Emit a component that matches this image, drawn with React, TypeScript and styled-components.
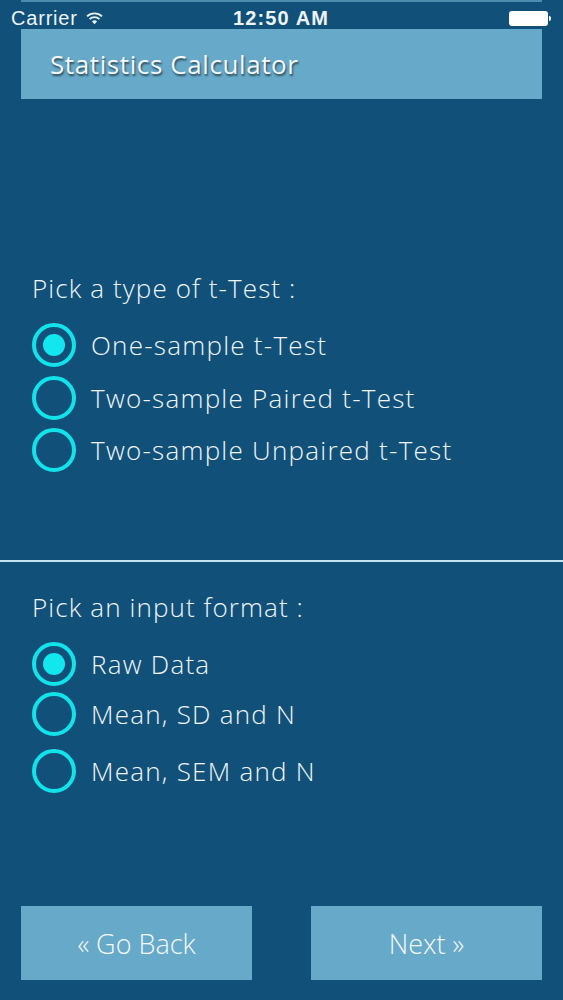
import styled, { createGlobalStyle } from 'styled-components';
import { useState } from 'react';

const GlobalStyle = createGlobalStyle`
  html, body {
    margin: 0;
    padding: 0;
    background: #115179;
  }
  * {
    box-sizing: border-box;
  }
`;

type Choice = {
  label: string;
  space: number;
};

const testTypes: Choice[] = [
  { label: 'One-sample t-Test', space: 0 },
  { label: 'Two-sample Paired t-Test', space: 53 },
  { label: 'Two-sample Unpaired t-Test', space: 52 },
];

const inputFormats: Choice[] = [
  { label: 'Raw Data', space: 0 },
  { label: 'Mean, SD and N', space: 50 },
  { label: 'Mean, SEM and N', space: 57 },
];

const WifiIcon = () => (
  <svg width="17" height="13" viewBox="0 0 16 12">
    <path d="M8 11.5 L5.6 8.9 A3.4 3.4 0 0 1 10.4 8.9 Z" fill="#e8f1f6" />
    <path
      d="M3.4 6.6 A6.6 6.6 0 0 1 12.6 6.6"
      fill="none"
      stroke="#e8f1f6"
      strokeWidth="1.8"
    />
    <path
      d="M1 4 A10 10 0 0 1 15 4"
      fill="none"
      stroke="#e8f1f6"
      strokeWidth="1.8"
    />
  </svg>
);

const Radio = ({ checked }: { checked: boolean }) => (
  <Ring>{checked && <Dot />}</Ring>
);

const RadioGroup = ({
  options,
  picked,
  onPick,
}: {
  options: Choice[];
  picked: number;
  onPick: (i: number) => void;
}) => (
  <List>
    {options.map((o, i) => (
      <Option key={o.label} $space={o.space} onClick={() => onPick(i)}>
        <Radio checked={picked === i} />
        <OptionLabel>{o.label}</OptionLabel>
      </Option>
    ))}
  </List>
);

export default function App() {
  const [testType, setTestType] = useState(0);
  const [format, setFormat] = useState(0);

  return (
    <Screen>
      <GlobalStyle />
      <TopEdge />
      <StatusBar>
        <Carrier>
          Carrier <WifiIcon />
        </Carrier>
        <Clock>12:50 AM</Clock>
        <Battery>
          <BatteryBody />
          <BatteryTip />
        </Battery>
      </StatusBar>
      <Header>
        <Title>Statistics Calculator</Title>
      </Header>

      <Section $top={174}>
        <Prompt>Pick a type of t-Test :</Prompt>
        <RadioGroup options={testTypes} picked={testType} onPick={setTestType} />
      </Section>

      <Divider />

      <Section $top={30}>
        <Prompt>Pick an input format :</Prompt>
        <RadioGroup options={inputFormats} picked={format} onPick={setFormat} />
      </Section>

      <Footer>
        <NavButton>« Go Back</NavButton>
        <NavButton>Next »</NavButton>
      </Footer>
    </Screen>
  );
}

const Screen = styled.div`
  position: relative;
  width: 563px;
  height: 1000px;
  background: #115179;
  display: flex;
  flex-direction: column;
  font-family: 'Open Sans', Lato, sans-serif;
  font-weight: 300;
  color: #f0f5f8;
  overflow: hidden;
`;
const TopEdge = styled.div`
  height: 2px;
  margin: 0 21px;
  background: #4b8bad;
`;
const StatusBar = styled.div`
  height: 27px;
  display: flex;
  align-items: center;
  justify-content: space-between;
  padding: 5px 12px 0 11px;
  font-family: 'Liberation Sans', Arial, sans-serif;
  font-weight: 400;
  font-size: 20px;
  line-height: 22px;
  letter-spacing: 0.8px;
  color: #eef4f8;
`;
const Carrier = styled.div`
  display: flex;
  align-items: center;
  gap: 8px;
  width: 140px;
`;
const Clock = styled.div`
  font-weight: 700;
  letter-spacing: 1.1px;
`;
const Battery = styled.div`
  width: 140px;
  display: flex;
  justify-content: flex-end;
  align-items: center;
`;
const BatteryBody = styled.div`
  width: 39px;
  height: 15px;
  border-radius: 3px;
  background: #ffffff;
`;
const BatteryTip = styled.div`
  width: 2px;
  height: 5px;
  margin-left: 1px;
  border-radius: 0 2px 2px 0;
  background: #ffffff;
`;
const Header = styled.div`
  height: 70px;
  margin: 0 21px;
  background: #67a9c8;
  display: flex;
  align-items: center;
  padding-left: 29px;
`;
const Title = styled.h1`
  margin: 0;
  font-size: 26px;
  font-weight: 400;
  line-height: 30px;
  letter-spacing: 0.6px;
  color: #f4f8fa;
  text-shadow: 1px 2px 2px rgba(20, 40, 50, 0.75);
`;
const Section = styled.div<{ $top: number }>`
  padding: ${({ $top }) => $top}px 0 0 32px;
`;
const Prompt = styled.div`
  font-size: 26px;
  line-height: 30px;
  letter-spacing: 1.1px;
  margin-bottom: 20px;
`;
const List = styled.div`
  display: flex;
  flex-direction: column;
`;
const Option = styled.div<{ $space: number }>`
  display: flex;
  align-items: center;
  gap: 15px;
  height: 44px;
  margin-top: ${({ $space }) => ($space ? $space - 44 : 0)}px;
  cursor: pointer;
`;
const Ring = styled.div`
  width: 44px;
  height: 44px;
  border-radius: 50%;
  border: 4px solid #12e2ea;
  display: flex;
  align-items: center;
  justify-content: center;
  flex-shrink: 0;
`;
const Dot = styled.div`
  width: 22px;
  height: 22px;
  border-radius: 50%;
  background: #12e6ee;
`;
const OptionLabel = styled.span`
  font-size: 26px;
  line-height: 30px;
  letter-spacing: 1.25px;
`;
const Divider = styled.div`
  margin-top: 88px;
  height: 2px;
  background: #c4e4f2;
`;
const Footer = styled.div`
  margin-top: auto;
  margin-bottom: 20px;
  padding: 0 21px;
  display: flex;
  justify-content: space-between;
`;
const NavButton = styled.button`
  width: 231px;
  height: 74px;
  border: none;
  background: #67a9c8;
  color: #f4f8fa;
  font-family: 'Open Sans', Lato, sans-serif;
  font-weight: 300;
  font-size: 27px;
  cursor: pointer;
`;
